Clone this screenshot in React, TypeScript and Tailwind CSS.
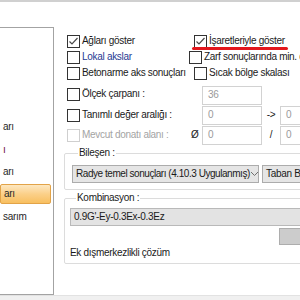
import React from "react";

const font = { fontFamily: '"Liberation Sans", Arial, sans-serif' };

const Box = ({ checked = false, disabled = false }: { checked?: boolean; disabled?: boolean }) => (
  <span
    className={
      "w-[13px] h-[13px] shrink-0 border bg-white flex items-center justify-center " +
      (disabled ? "border-[#cfcfcf]" : "border-[#333333]")
    }
  >
    {checked && (
      <svg width="11" height="11" viewBox="0 0 11 11">
        <polyline points="1.5,5.5 4,8 9.5,2" fill="none" stroke="#4a4a4a" strokeWidth="1.2" />
      </svg>
    )}
  </span>
);

const Check = ({
  label,
  checked,
  disabled,
  color = "text-[#1a1a1a]",
}: {
  label: string;
  checked?: boolean;
  disabled?: boolean;
  color?: string;
}) => (
  <div className="flex items-center gap-[2px] whitespace-nowrap">
    <Box checked={checked} disabled={disabled} />
    <span className={disabled ? "text-[#a3a3a3]" : color}>{label}</span>
  </div>
);

const Field = ({ value }: { value: string }) => (
  <div className="w-[60px] h-[19px] shrink-0 border border-[#d2d2d2] bg-white text-[#9a9a9a] pl-[5px] flex items-center">
    {value}
  </div>
);

const menu = [
  { t: "arı", mt: "mt-[89px]", c: "text-[#262626]" },
  { t: "ı", mt: "mt-[3px]", c: "text-[#6d0d3d]" },
  { t: "arı", mt: "mt-[2px]", c: "text-[#262626]" },
  { t: "arı", mt: "mt-[2px]", c: "text-[#262626]", sel: true },
  { t: "sarım", mt: "mt-[3px]", c: "text-[#262626]" },
];

export default function App() {
  return (
    <div
      className="w-[300px] h-[300px] bg-white overflow-hidden flex flex-col text-[10px] leading-[14px] tracking-[-0.3px]"
      style={font}
    >
      <div className="h-[2px] bg-[#d0d0d0] shrink-0" />
      <div className="flex-1 flex min-h-0">
        <div className="w-[54px] shrink-0 mt-[25px] border-t border-r border-b border-[#a3a3a3] flex flex-col">
          {menu.map((m, i) => (
            <div
              key={i}
              className={
                m.mt +
                " h-[20px] flex items-center pl-[3px] w-[51px] " +
                m.c +
                (m.sel
                  ? " bg-gradient-to-b from-[#fde7c0] via-[#fbd089] to-[#f8bf5f] border border-[#e2a348] rounded-[2px]"
                  : "")
              }
            >
              {m.t}
            </div>
          ))}
        </div>

        <div className="ml-[10px] flex flex-col w-[300px] shrink-0">
          <div className="mt-[31px] flex flex-col pl-[3px]">
            <div className="flex h-[16px] items-center">
              <div className="w-[127px]">
                <Check label="Ağları göster" checked />
              </div>
              <div className="relative">
                <Check label="İşaretleriyle göster" checked />
                <span className="absolute left-[-2px] top-[13px] w-[96px] h-[3px] rounded-full bg-[#e3171d]" />
              </div>
            </div>
            <div className="flex h-[16px] items-center">
              <div className="w-[127px]">
                <Check label="Lokal akslar" color="text-[#1f3a93]" />
              </div>
              <Check label="Zarf sonuçlarında min. değerleri göster" />
            </div>
            <div className="flex h-[16px] items-center">
              <div className="w-[127px]">
                <Check label="Betonarme aks sonuçları" />
              </div>
              <Check label="Sıcak bölge skalası" />
            </div>
          </div>

          <div className="mt-[4px] flex flex-col pl-[3px]">
            <div className="flex h-[20px] items-center">
              <div className="w-[135px] self-start pt-[2px]">
                <Check label="Ölçek çarpanı :" />
              </div>
              <Field value="36" />
            </div>
            <div className="flex h-[20px] items-center">
              <div className="w-[135px]">
                <Check label="Tanımlı değer aralığı :" />
              </div>
              <Field value="0" />
              <span className="w-[18px] text-center text-[#1a1a1a]">-&gt;</span>
              <Field value="0" />
            </div>
            <div className="flex h-[20px] items-center">
              <div className="w-[124px]">
                <Check label="Mevcut donatı alanı :" disabled />
              </div>
              <span className="w-[11px] text-[#1a1a1a]">Ø</span>
              <Field value="0" />
              <span className="w-[18px] text-center text-[#1a1a1a]">/</span>
              <Field value="0" />
            </div>
          </div>

          <fieldset className="mt-[1px] w-[280px] border border-[#dcdcdc] rounded-[2px] pl-[7px] pb-[6px]">
            <legend className="ml-[6px] px-[1px] text-[#1a1a1a]">Bileşen :</legend>
            <div className="flex mt-[5px] gap-[3px]">
              <div className="w-[187px] h-[18px] bg-[#e5e5e5] border border-[#acacac] flex items-center pl-[3px] text-[#1a1a1a] whitespace-nowrap overflow-hidden">
                <span className="flex-1 tracking-[-0.45px]">Radye temel sonuçları (4.10.3 Uygulanmış)</span>
                <svg width="9" height="6" viewBox="0 0 9 6" className="mr-[3px] shrink-0">
                  <polyline points="1,1 4.5,4.5 8,1" fill="none" stroke="#707070" strokeWidth="1" />
                </svg>
              </div>
              <div className="w-[80px] h-[18px] bg-[#e5e5e5] border border-[#acacac] flex items-center pl-[3px] text-[#1a1a1a] whitespace-nowrap overflow-hidden">
                Taban Basıncı
              </div>
            </div>
          </fieldset>

          <fieldset className="mt-[1px] w-[280px] border border-[#dcdcdc] rounded-[2px] pl-[5px] pb-[3px]">
            <legend className="ml-[6px] px-[1px] text-[#1a1a1a]">Kombinasyon :</legend>
            <div className="mt-[3px] h-[18px] w-[260px] bg-[#e3e3e3] border border-[#b9b9b9] flex items-center pl-[3px] text-[#1a1a1a]">
              0.9G'-Ey-0.3Ex-0.3Ez
            </div>
            <div className="flex mt-[2px]">
              <div className="ml-[209px] w-[40px] h-[17px] bg-[#cccccc] border border-[#adadad]" />
            </div>
            <div className="h-[14px] mt-[1px] flex items-center text-[#1a1a1a]">Ek dışmerkezlikli çözüm</div>
          </fieldset>
        </div>
      </div>
      <div className="h-[5px] shrink-0 bg-[#f0f0f0] border-t border-[#e2e2e2]" />
    </div>
  );
}
